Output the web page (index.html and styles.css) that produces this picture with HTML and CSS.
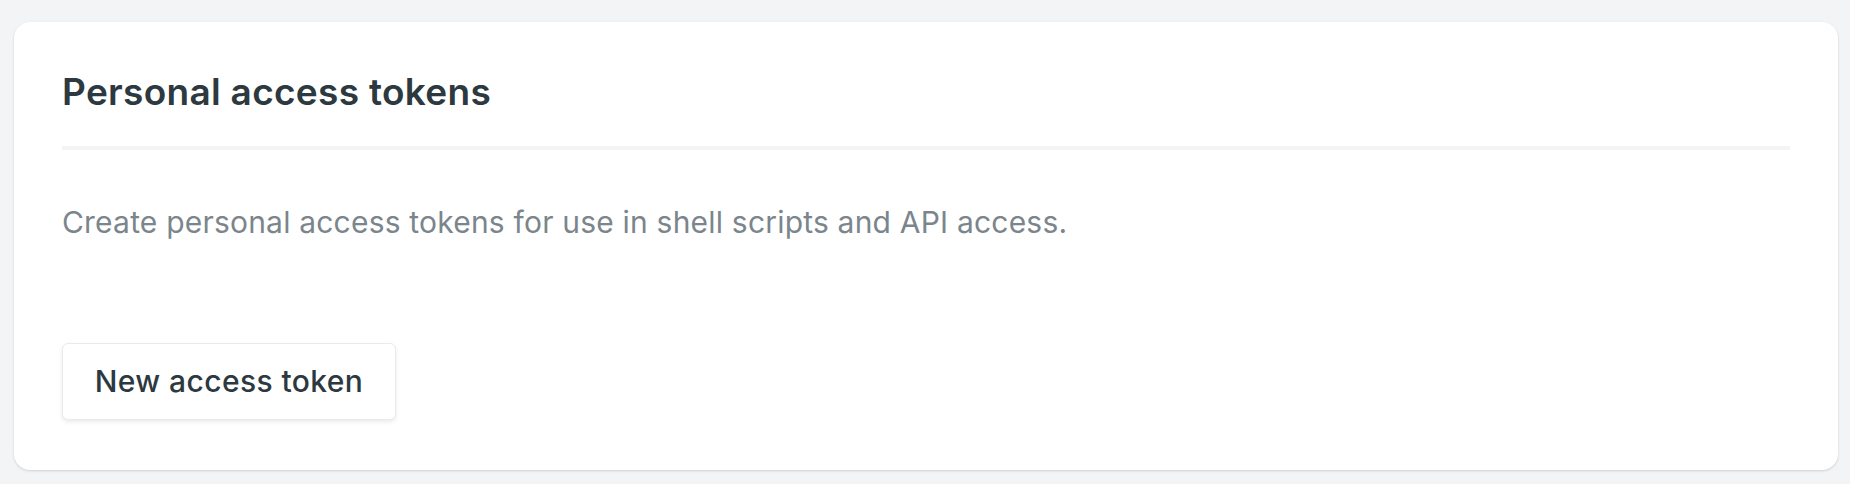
FILE: index.html
```html
<!DOCTYPE html>
<html lang="en">
<head>
<meta charset="utf-8">
<title>Personal access tokens</title>
<link rel="stylesheet" href="styles.css">
</head>
<body>
<main class="page">
  <section class="card">
    <header class="card-header">
      <h2 class="card-title">Personal access tokens</h2>
    </header>
    <p class="card-desc">Create personal access tokens for use in shell scripts and API access.</p>
    <div class="card-actions">
      <button class="btn" type="button">New access token</button>
    </div>
  </section>
</main>
</body>
</html>
```
FILE: styles.css
```css
html, body {
  margin: 0;
  padding: 0;
  background: #f3f4f6;
  font-family: Inter, "Noto Sans", "Liberation Sans", sans-serif;
}

.page {
  padding: 22px 12px 14px 14px;
}

.card {
  background: #ffffff;
  border-radius: 16px;
  box-shadow: 0 1px 3px rgba(15, 23, 42, 0.10), 0 1px 2px rgba(15, 23, 42, 0.06);
  padding: 50px 48px 50px 48px;
  height: 448px;
  box-sizing: border-box;
}

.card-header {
  padding-bottom: 34px;
  border-bottom: 4px solid #f3f4f6;
}

.card-title {
  margin: 0;
  font-size: 37px;
  line-height: 40px;
  font-weight: 600;
  letter-spacing: 0.3px;
  color: #2d3940;
}

.card-desc {
  margin: 54px 0 0 0;
  font-size: 30px;
  line-height: 36px;
  letter-spacing: 0.2px;
  color: #7b858c;
}

.card-actions {
  margin-top: 103px;
}

.btn {
  font-family: inherit;
  font-size: 30px;
  font-weight: 500;
  line-height: 36px;
  letter-spacing: 0.4px;
  color: #2d3940;
  background: #ffffff;
  border: 1px solid #e8eaed;
  border-radius: 6px;
  box-shadow: 0 2px 4px rgba(15, 23, 42, 0.09);
  padding: 19px 0 20px 0;
  width: 334px;
  height: 77px;
  box-sizing: border-box;
  text-align: center;
  cursor: pointer;
}
```
